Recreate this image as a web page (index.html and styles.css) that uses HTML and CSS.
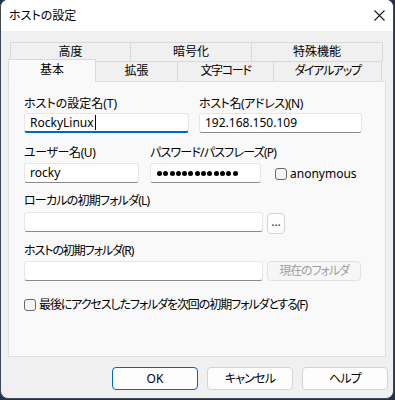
FILE: index.html
```html
<!DOCTYPE html>
<html lang="ja">
<head>
    <meta charset="UTF-8">
    <title>ホストの設定</title>
    <link rel="stylesheet" href="styles.css">
</head>
<body>
    <div class="window">
        <div class="titlebar">
            <span class="title">ホストの設定</span>
            <svg class="close" width="11" height="11" viewBox="0 0 11 11">
                <path d="M0.5 0.5 L10.5 10.5 M10.5 0.5 L0.5 10.5" stroke="#1a1a1a" stroke-width="1.1" fill="none"/>
            </svg>
        </div>

        <div class="content">
            <div class="tabs">
                <div class="tab-row back">
                    <div class="tab t-koudo">高度</div>
                    <div class="tab t-angou">暗号化</div>
                    <div class="tab t-tokushu last">特殊機能</div>
                </div>
                <div class="tab-row front">
                    <div class="tab t-kihon selected">基本</div>
                    <div class="tab t-kakuchou">拡張</div>
                    <div class="tab t-moji tight-4">文字コード</div>
                    <div class="tab t-dial last tight-4">ダイアルアップ</div>
                </div>
            </div>

            <div class="panel">
                <div class="row row-a">
                    <div class="field f-name">
                        <label>ホストの設定名(T)</label>
                        <div class="input focused">RockyLinux<span class="caret"></span></div>
                    </div>
                    <div class="field f-host">
                        <label class="tight-1">ホスト名(アドレス)(N)</label>
                        <div class="input">192.168.150.109</div>
                    </div>
                </div>

                <div class="row row-b">
                    <div class="field f-user">
                        <label class="tight-1">ユーザー名(U)</label>
                        <div class="input">rocky</div>
                    </div>
                    <div class="field f-pass">
                        <label class="tight-2">パスワード/パスフレーズ(P)</label>
                        <div class="input dots">
                            <span></span><span></span><span></span><span></span><span></span>
                            <span></span><span></span><span></span><span></span><span></span>
                            <span></span><span></span><span></span>
                        </div>
                    </div>
                    <div class="check anon">
                        <span class="box"></span>
                        <span>anonymous</span>
                    </div>
                </div>

                <div class="field f-local">
                    <label class="tight-2">ローカルの初期フォルダ(L)</label>
                    <div class="line">
                        <div class="input wide"></div>
                        <div class="btn small">...</div>
                    </div>
                </div>

                <div class="field f-remote">
                    <label class="tight-3">ホストの初期フォルダ(R)</label>
                    <div class="line">
                        <div class="input wide"></div>
                        <div class="btn current tight-3">現在のフォルダ</div>
                    </div>
                </div>

                <div class="check last-folder">
                    <span class="box"></span>
                    <span class="tight-3">最後にアクセスしたフォルダを次回の初期フォルダとする(F)</span>
                </div>
            </div>

            <div class="buttons">
                <div class="btn dialog default">OK</div>
                <div class="btn dialog tight-2">キャンセル</div>
                <div class="btn dialog tight-2">ヘルプ</div>
            </div>
        </div>
    </div>
</body>
</html>
```

FILE: styles.css
```css
body {
    margin: 0;
    background: #1d3550;
    font-family: "Noto Sans", "Noto Sans CJK JP", sans-serif;
    font-size: 12px;
    color: #000;
    font-feature-settings: "palt";
}
.window {
    width: 392px;
    height: 398px;
    margin-top: -1px;
    border: 1px solid #3d4956;
    border-radius: 8px;
    background: #f0f0f0;
    overflow: hidden;
}
.titlebar {
    height: 31px;
    background: #fff;
    display: flex;
    align-items: center;
    justify-content: space-between;
    padding-left: 8px;
}
.title {
    line-height: 16px;
}
.close {
    margin-right: 8px;
}

.tight-1 { letter-spacing: -0.4px; }
.tight-2 { letter-spacing: -0.8px; }
.tight-3 { letter-spacing: -1.1px; }
.tight-4 { letter-spacing: -1.3px; }

/* tabs */
.tabs {
    margin: 11px 0 0 7px;
}
.tab-row {
    display: flex;
}
.tab-row.back {
    margin-left: 2px;
    height: 19px;
}
.tab-row.front {
    height: 20px;
    align-items: flex-end;
}
.tab {
    box-sizing: border-box;
    border-top: 1px solid #d9d9d9;
    border-left: 1px solid #d9d9d9;
    background: #f0f0f0;
    text-align: center;
    height: 100%;
    line-height: 18px;
    white-space: nowrap;
}
.tab.last {
    border-right: 1px solid #d9d9d9;
}
.t-koudo { width: 120px; }
.t-angou { width: 121px; }
.t-tokushu { width: 132px; }
.t-kihon { width: 88px; }
.t-kakuchou { width: 82px; }
.t-moji { width: 96px; }
.t-dial { width: 109px; }
.tab.selected {
    position: relative;
    z-index: 1;
    height: 23px;
    margin-bottom: -1px;
    background: #f9f9f9;
    border-right: 1px solid #d9d9d9;
    margin-right: -1px;
    line-height: 20px;
}

/* panel */
.panel {
    box-sizing: border-box;
    width: 378px;
    height: 276px;
    margin-left: 7px;
    border: 1px solid #dedede;
    background: #f9f9f9;
    padding: 14px 0 0 15px;
}
.row {
    display: flex;
}
.field label {
    display: block;
    height: 16px;
    line-height: 16px;
    margin-bottom: 1px;
    white-space: nowrap;
}
.input {
    box-sizing: border-box;
    height: 20px;
    background: #fff;
    border: 1px solid #e6e6e6;
    border-bottom-color: #8a8a8a;
    border-radius: 3px;
    padding-left: 5px;
    line-height: 18px;
    display: flex;
    align-items: center;
}
.input.focused {
    border-bottom: 2px solid #0067c0;
}
.caret {
    display: inline-block;
    width: 1px;
    height: 15px;
    background: #000;
    margin-left: 1px;
}
.f-name { width: 165px; margin-right: 10px; }
.f-host { width: 163px; }
.row-b {
    margin-top: 12px;
}
.row-b .field label {
    margin-bottom: 2px;
}
.f-user { width: 115px; margin-right: 11px; }
.f-pass { width: 111px; margin-right: 14px; }
.dots {
    padding-left: 6px;
    gap: 1.3px;
}
.dots span {
    width: 5px;
    height: 5px;
    border-radius: 50%;
    background: #000;
}
.check {
    display: flex;
    align-items: center;
    gap: 4px;
    height: 16px;
    line-height: 16px;
    white-space: nowrap;
}
.box {
    box-sizing: border-box;
    width: 12px;
    height: 12px;
    border: 1px solid #6a6a6a;
    border-radius: 3px;
    background: #f4f4f4;
}
.anon {
    margin-top: 21px;
    gap: 3px;
}
.f-local {
    margin-top: 10px;
}
.f-local label {
    margin-bottom: 3px;
}
.f-remote {
    margin-top: 9px;
}
.f-remote label {
    margin-bottom: 2px;
}
.line {
    display: flex;
    align-items: flex-start;
    gap: 4px;
}
.input.wide {
    width: 239px;
}
.btn {
    box-sizing: border-box;
    border: 1px solid #d3d3d3;
    border-radius: 4px;
    background: #fdfdfd;
    text-align: center;
    white-space: nowrap;
}
.btn.small {
    width: 18px;
    height: 21px;
    margin-top: 1px;
    line-height: 16px;
    color: #1a2a50;
}
.btn.current {
    width: 94px;
    height: 20px;
    line-height: 18px;
    color: #9d9d9d;
    background: #f6f6f6;
    border-color: #e2e2e2;
}
.last-folder {
    margin-top: 16px;
    gap: 3px;
}

/* dialog buttons */
.buttons {
    display: flex;
    justify-content: flex-end;
    gap: 9px;
    padding-right: 5px;
    margin-top: 10px;
}
.btn.dialog {
    width: 86px;
    height: 23px;
    line-height: 21px;
}
.btn.dialog.default {
    border-color: #0067c0;
}
```
